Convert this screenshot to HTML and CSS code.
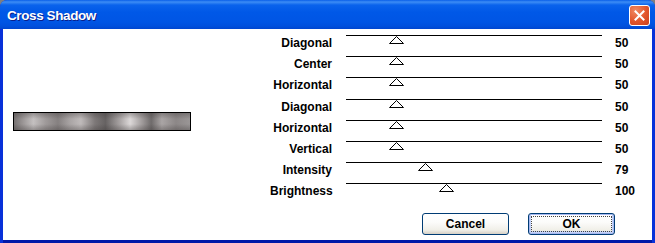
FILE: index.html
```html
<!DOCTYPE html>
<html lang="en">
<head>
    <meta charset="UTF-8">
    <title>Cross Shadow</title>
    <link rel="stylesheet" href="styles.css">
</head>
<body>
    <div class="window">
        <div class="titlebar">
            <span class="title">Cross Shadow</span>
            <button class="close-btn" aria-label="Close">
                <svg width="11" height="11" viewBox="0 0 11 11">
                    <path d="M1.5 1.5 L9.5 9.5 M9.5 1.5 L1.5 9.5" stroke="#fff" stroke-width="2" stroke-linecap="square"/>
                </svg>
            </button>
        </div>
        <div class="content">
            <div class="main">
                <div class="preview-pane">
                    <div class="preview"></div>
                </div>
                <div class="sliders">
                    <div class="slider-row">
                        <span class="label">Diagonal</span>
                        <div class="track"><span class="thumb" style="left: 50px"></span></div>
                        <span class="value">50</span>
                    </div>
                    <div class="slider-row">
                        <span class="label">Center</span>
                        <div class="track"><span class="thumb" style="left: 50px"></span></div>
                        <span class="value">50</span>
                    </div>
                    <div class="slider-row">
                        <span class="label">Horizontal</span>
                        <div class="track"><span class="thumb" style="left: 50px"></span></div>
                        <span class="value">50</span>
                    </div>
                    <div class="slider-row">
                        <span class="label">Diagonal</span>
                        <div class="track"><span class="thumb" style="left: 50px"></span></div>
                        <span class="value">50</span>
                    </div>
                    <div class="slider-row">
                        <span class="label">Horizontal</span>
                        <div class="track"><span class="thumb" style="left: 50px"></span></div>
                        <span class="value">50</span>
                    </div>
                    <div class="slider-row">
                        <span class="label">Vertical</span>
                        <div class="track"><span class="thumb" style="left: 50px"></span></div>
                        <span class="value">50</span>
                    </div>
                    <div class="slider-row">
                        <span class="label">Intensity</span>
                        <div class="track"><span class="thumb" style="left: 79px"></span></div>
                        <span class="value">79</span>
                    </div>
                    <div class="slider-row">
                        <span class="label">Brightness</span>
                        <div class="track"><span class="thumb" style="left: 100px"></span></div>
                        <span class="value">100</span>
                    </div>
                </div>
            </div>
            <div class="buttons">
                <button class="btn">Cancel</button>
                <button class="btn btn-default"><span class="focus">OK</span></button>
            </div>
        </div>
    </div>
</body>
</html>
```
FILE: styles.css
```css
body {
    margin: 0;
    padding: 0;
    background: #7f7f7f;
    font-family: "Liberation Sans", Arial, sans-serif;
}

.window {
    width: 655px;
    height: 243px;
    box-sizing: border-box;
    display: flex;
    flex-direction: column;
    border-radius: 7px 7px 0 0;
    overflow: hidden;
    background: #0831d9;
}

.titlebar {
    height: 29px;
    flex: none;
    display: flex;
    align-items: center;
    justify-content: space-between;
    padding: 0 5px 0 7px;
    background: linear-gradient(#0a5fe8 0, #3d8df5 2px, #0a63ec 5px, #0058e7 12px, #0055e4 22px, #0050dd 26px, #0046cf 29px);
}

.title {
    color: #fff;
    font-weight: bold;
    font-size: 13.5px;
    letter-spacing: -0.4px;
    text-shadow: 1px 1px 0 #0a1e8a;
    margin-top: 1px;
}

.close-btn {
    width: 21px;
    height: 21px;
    padding: 0;
    border: 1px solid #fff;
    border-radius: 3px;
    background: radial-gradient(circle at 30% 25%, #f08a64 0, #e2552b 55%, #c8401e 100%);
    display: flex;
    align-items: center;
    justify-content: center;
    margin-top: 1px;
}

.content {
    flex: 1;
    margin: 0 3px 3px 3px;
    background: #fff;
    display: flex;
    flex-direction: column;
    box-shadow: 0 3px 0 #0019a8;
}

.main {
    display: flex;
    padding-top: 1px;
}

.preview-pane {
    width: 267px;
    display: flex;
    align-items: center;
    padding-left: 10px;
    box-sizing: border-box;
}

.preview {
    width: 176px;
    height: 17px;
    border: 1px solid #000;
    margin-top: 13px;
    background:
        linear-gradient(rgba(60, 55, 55, 0.35), rgba(255, 255, 255, 0) 35%, rgba(255, 255, 255, 0) 65%, rgba(60, 55, 55, 0.35)),
        linear-gradient(90deg, #777272 0, #9a9595 5%, #c4c0c0 11%, #9f9a9a 18%, #858080 25%, #aaa5a5 32%, #bfbaba 38%, #7d7878 46%, #666262 52%, #a7a2a2 60%, #dcd8d8 66%, #9e9999 73%, #6f6b6b 78%, #aaa5a5 84%, #8c8787 92%, #9a9696 100%);
}

.sliders {
    display: flex;
    flex-direction: column;
}

.slider-row {
    height: 21.2px;
    display: flex;
    font-size: 12px;
    font-weight: bold;
    color: #000;
}

.label {
    width: 62px;
    text-align: right;
    padding-top: 6px;
}

.track {
    position: relative;
    width: 256px;
    height: 1px;
    margin: 5px 0 0 14px;
    background: #000;
}

.thumb {
    position: absolute;
    top: 1px;
    width: 15px;
    height: 8px;
    margin-left: -7px;
    background: url("data:image/svg+xml,%3Csvg xmlns='http://www.w3.org/2000/svg' width='15' height='8'%3E%3Cpolygon points='0.5,7.5 7.5,0.5 14.5,7.5' fill='%23fff' stroke='%23000'/%3E%3C/svg%3E");
}

.value {
    padding-top: 6px;
    margin-left: 13px;
}

.buttons {
    display: flex;
    justify-content: flex-end;
    gap: 19px;
    padding: 13px 37px 0 0;
}

.btn {
    width: 87px;
    height: 22px;
    font-family: "Liberation Sans", Arial, sans-serif;
    font-size: 12px;
    font-weight: bold;
    color: #000;
    border: 1px solid #003c74;
    border-radius: 3px;
    background: linear-gradient(#fff 0, #fcfcfb 40%, #f0efe8 80%, #d6d0c5 100%);
    padding: 0;
}

.btn-default {
    box-shadow: inset 0 0 0 1px #a6b8f0, inset 0 -1px 0 2px #c5d3f8;
    padding: 2px;
}

.focus {
    display: flex;
    align-items: center;
    justify-content: center;
    height: 100%;
    box-sizing: border-box;
    border: 1px dotted #444;
}
```
